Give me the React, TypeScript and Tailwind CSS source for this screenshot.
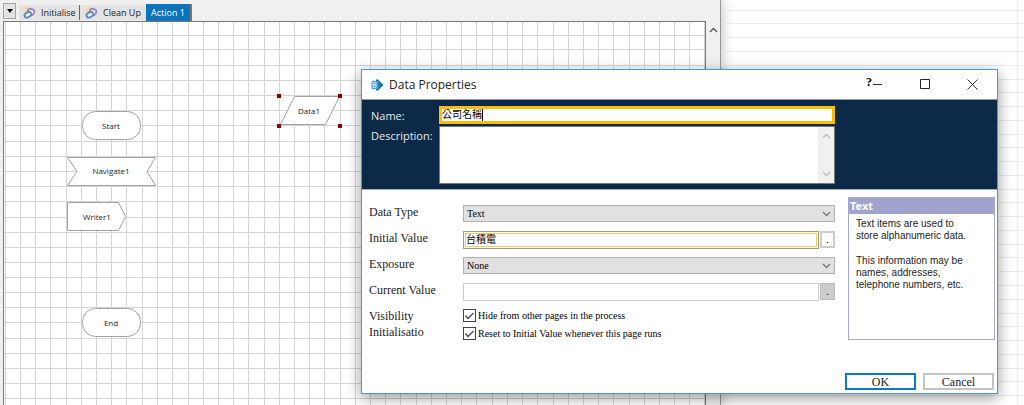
import { useState } from 'react';

const V_LINES = [5, 20, 35, 50, 66, 81, 96, 111, 126, 142, 157, 172, 188, 203, 218, 233, 248, 264, 279, 294, 309, 324, 340, 355, 370, 385, 400, 416, 431, 446, 461, 476, 492, 507, 522, 537, 553, 568, 583, 598, 613, 629, 644, 659, 674, 689, 704];
const H_LINES = [35, 49, 65, 80, 95, 110, 125, 141, 156, 171, 186, 201, 217, 232, 247, 262, 277, 292, 307, 322, 338, 353, 368, 383, 398];
const SHEET_LINES = [10, 23, 37, 51, 65, 79, 92, 106, 120, 134, 147, 161, 175, 189, 202, 216, 230, 244, 257, 271, 285, 299, 313, 326, 340, 354, 368, 381, 395];

function PageIcon() {
  return (
    <svg className="shrink-0" width="13" height="12" viewBox="0 0 13 12" fill="none">
      <path d="M3.5 0v7M0 3.5h7M1.2 1.2l4.6 4.6M5.8 1.2L1.2 5.8" stroke="#f5d596" strokeWidth="1.2" />
      <rect x="5" y="2" width="6.5" height="5.5" rx="2.2" transform="rotate(22 8 4)" stroke="#9f7fc4" strokeWidth="1.8" fill="#f3edf8" />
      <rect x="1.5" y="5.5" width="7" height="4.5" rx="2" transform="rotate(-28 5 8)" stroke="#5288c0" strokeWidth="1.8" fill="#e6f0fa" />
    </svg>
  );
}

function Toolbar() {
  return (
    <div className="flex h-[21px] items-start bg-[#f0f0f0] pl-[3px] pt-[3px]">
      <button aria-label="Page list" className="flex h-4 w-[13px] items-center justify-center border border-[#a5a5a5] bg-[#e4e4e4]">
        <svg width="6" height="4" viewBox="0 0 6 4"><path d="M0 0h6L3 4z" fill="#000" /></svg>
      </button>
      <div role="tablist" className="ml-[3px] flex items-start text-[9px] leading-[14px] text-[#222]">
        <button role="tab" className="mt-[2px] flex h-[15px] w-[61px] items-center gap-[5px] border-r border-[#666] bg-[#e3e3e3] pl-1 whitespace-nowrap"><PageIcon />Initialise</button>
        <button role="tab" className="mt-[2px] flex h-[15px] w-[66px] items-center gap-[5px] bg-[#e3e3e3] pl-[5px] whitespace-nowrap"><PageIcon />Clean Up</button>
        <button role="tab" aria-selected="true" className="mt-px h-[17px] w-[46px] border-r-2 border-[#777] bg-[#0b74bd] text-white whitespace-nowrap">Action 1</button>
      </div>
    </div>
  );
}

function Canvas() {
  return (
    <svg className="block h-full w-full" role="img" aria-label="Process flow">
      <svg x="-4" y="-22" width="710" height="430" overflow="visible">
        <g stroke="#d5d5d5" strokeWidth="1">
          {V_LINES.map((x) => <path key={x} d={`M${x + 0.5} 20V2000`} />)}
          {H_LINES.map((y) => <path key={y} d={`M0 ${y + 0.5}H2000`} />)}
        </g>
        <g fill="#fff" stroke="#a3a3a3" strokeWidth="1">
          <rect x="82.5" y="111.5" width="58" height="28" rx="13" />
          <path d="M67.5 157.5H155.5L147 171.5L155.5 185.5H67.5L77 171.5Z" />
          <path d="M67.5 202.5H118.5L125.5 216.5L118.5 230.5H67.5Z" />
          <path d="M294.5 96.5H339.5L325.5 124.5H280.5Z" />
          <rect x="82.5" y="308.5" width="58" height="28" rx="13" />
        </g>
        <g fill="#850000">
          <rect x="277" y="94" width="4" height="4" />
          <rect x="338" y="94" width="4" height="4" />
          <rect x="277" y="124" width="4" height="4" />
          <rect x="338" y="124" width="4" height="4" />
        </g>
        <g className="text-[8px]" fill="#222" textAnchor="middle">
          <text x="111" y="129">Start</text>
          <text x="111" y="174">Navigate1</text>
          <text x="97" y="220">Writer1</text>
          <text x="309" y="114">Data1</text>
          <text x="111" y="326">End</text>
        </g>
      </svg>
    </svg>
  );
}

function Chevron({ up = false }: { up?: boolean }) {
  return (
    <svg width="9" height="6" viewBox="0 0 9 6" fill="none" stroke="currentColor" strokeWidth="1.3">
      <path d={up ? 'M1 5L4.5 1.5L8 5' : 'M1 1L4.5 4.5L8 1'} />
    </svg>
  );
}

function TitleBar() {
  return (
    <div className="flex h-[30px] items-center border-b border-[#8d9aa6] pl-2">
      <svg width="14" height="14" viewBox="0 0 14 14">
        <path d="M1 3.500L4 1.500v11L1 10.500z" fill="#9ccbe9" />
        <path d="M6 1.500h2l5.500 5.500L8 12.500H6z" fill="#1571b5" />
        <path d="M2.500 3h6v8h-6z" fill="#4b9fd6" />
        <path d="M3.500 4.500h2.500v2H3.500zM3.500 7h2.500v2.500H3.500z" fill="none" stroke="#e2f1fb" strokeWidth=".8" />
      </svg>
      <h1 className="ml-[5px] flex-1 text-[12px] leading-4 text-[#222]">Data Properties</h1>
      <button aria-label="Help" className="mb-[6px] font-['Liberation_Serif'] text-[12px] leading-3 font-bold text-black">?</button>
      <button aria-label="Minimise" className="w-[11px] text-[#333]">
        <svg width="11" height="11" viewBox="0 0 11 11"><path d="M1 5.500h9" stroke="currentColor" /></svg>
      </button>
      <button aria-label="Maximise" className="ml-9 text-[#222]">
        <svg width="11" height="11" viewBox="0 0 11 11" fill="none"><path d="M1.500.5h9v9h-9z" stroke="currentColor" /></svg>
      </button>
      <button aria-label="Close" className="mr-[19px] ml-[37px] text-[#333]">
        <svg width="11" height="11" viewBox="0 0 11 11"><path d="M.5.5l10 10M10.500.5l-10 10" stroke="currentColor" /></svg>
      </button>
    </div>
  );
}

function Header() {
  const [name, setName] = useState('公司名稱');
  return (
    <div className="grid grid-cols-[68px_396px] gap-y-[2px] border-b border-[#a4b0bc] bg-[#0c2948] pt-[6px] pb-[5px] pl-[9px] text-[11px] text-[#e4e9ee]">
      <label htmlFor="name" className="pt-[2px] leading-4">Name:</label>
      <div className="flex h-[18px] min-w-0 border-[3px] border-[#fdbe02] bg-white">
        <input
          id="name"
          value={name}
          onChange={(e) => setName(e.target.value)}
          size={4}
          className="h-3 w-10 font-['Liberation_Serif','Noto_Sans_CJK_TC',sans-serif] text-[10px] leading-3 text-black outline-none"
        />
        <span className="h-3 w-px bg-black" />
      </div>
      <label htmlFor="description" className="pt-[2px] leading-4">Description:</label>
      <div className="flex h-[58px] border border-[#777] bg-white">
        <textarea id="description" className="min-w-0 flex-1 resize-none outline-none" />
        <div className="flex w-4 flex-col items-center justify-between bg-[#f0f0f0] py-[6px] text-[#bbb]">
          <Chevron up />
          <Chevron />
        </div>
      </div>
    </div>
  );
}

function Select({ id, value }: { id: string; value: string }) {
  return (
    <div className="grid h-[17px] items-center border border-[#b0b0b0] bg-[#e1e1e1]">
      <select id={id} className="col-start-1 row-start-1 h-[15px] w-full appearance-none pl-[3px] text-[10px] leading-[14px] text-black outline-none">
        <option>{value}</option>
      </select>
      <span className="pointer-events-none col-start-1 row-start-1 mr-[3px] justify-self-end text-[#777]"><Chevron /></span>
    </div>
  );
}

function Check({ id, label }: { id: string; label: string }) {
  const [on, setOn] = useState(true);
  return (
    <div className="flex h-[18px] items-start text-[10px] leading-[13px] text-black">
      <div className="grid">
        <input
          id={id}
          type="checkbox"
          checked={on}
          onChange={() => setOn(!on)}
          className="col-start-1 row-start-1 size-[13px] appearance-none border border-[#444] bg-white"
        />
        {on && (
          <svg className="pointer-events-none col-start-1 row-start-1" width="13" height="13" viewBox="0 0 13 13" fill="none">
            <path d="M2.500 6.500L5 9.500L10.500 4" stroke="#444" strokeWidth="1.200" />
          </svg>
        )}
      </div>
      <label htmlFor={id} className="ml-[2px] whitespace-nowrap">{label}</label>
    </div>
  );
}

function Form() {
  const [initial, setInitial] = useState('台積電');
  return (
    <div className="w-[466px] pt-[15px] font-['Liberation_Serif','Noto_Sans_CJK_TC',serif]">
      <div className="grid grid-cols-[94px_1fr] text-[12px] leading-[14px] text-[#222]">
        <label htmlFor="type" className="h-[26px]">Data Type</label>
        <Select id="type" value="Text" />
        <label htmlFor="initial" className="h-[26px]">Initial Value</label>
        <div className="flex h-[18px] gap-px">
          <div className="min-w-0 flex-1 border border-[#999] p-px">
            <input
              id="initial"
              value={initial}
              onChange={(e) => setInitial(e.target.value)}
              className="block h-[14px] w-full border border-[#f6cf4a] pb-[3px] text-[10px] leading-3 text-black outline-none"
            />
          </div>
          <button aria-label="Edit initial value" className="h-[17px] w-[15px] border-2 border-[#ccc] bg-white text-[10px] leading-3 text-black">.</button>
        </div>
        <label htmlFor="exposure" className="h-[26px]">Exposure</label>
        <Select id="exposure" value="None" />
        <label htmlFor="current" className="h-[26px]">Current Value</label>
        <div className="flex h-[18px] gap-px">
          <input id="current" disabled className="min-w-0 flex-1 border border-[#ccc] bg-white" />
          <button aria-label="View current value" className="h-[17px] w-[15px] border border-[#bbb] bg-[#ccc] text-[10px] leading-3 text-black">.</button>
        </div>
        <span className="h-[17px]">Visibility</span>
        <Check id="hide" label="Hide from other pages in the process" />
        <span className="leading-[11px]">Initialisatio</span>
        <Check id="reset" label="Reset to Initial Value whenever this page runs" />
      </div>
    </div>
  );
}

function DataDialog() {
  return (
    <section role="dialog" aria-label="Data Properties" className="absolute top-[69px] right-[26px] left-[361px] border border-[#4d97d2] bg-white shadow-[0_4px_14px_rgba(0,0,0,0.4)]">
      <TitleBar />
      <Header />
      <div className="flex pr-[2px] pl-[7px]">
        <Form />
        <aside className="mt-[7px] ml-[13px] h-[143px] flex-1 border border-[#a5a9cf] text-[10px] leading-3 text-[#222]">
          <h2 className="h-4 bg-[#a0a4cd] pl-px font-['Noto_Sans'] text-[11px] leading-4 font-bold text-white">Text</h2>
          <div className="pt-1 pl-[7px] font-['Liberation_Sans'] whitespace-nowrap">
            <p>Text items are used to<br />store alphanumeric data.</p>
            <p className="mt-[13px]">This information may be<br />names, addresses,<br />telephone numbers, etc.</p>
          </div>
        </aside>
      </div>
      <div className="mt-7 mr-[3px] mb-[3px] flex justify-end gap-[7px] font-['Liberation_Serif'] text-[12px] leading-3 text-[#222]">
        <button className="h-[17px] w-[71px] border-2 border-[#0c78d4] bg-white">OK</button>
        <button className="h-[17px] w-[71px] border-2 border-[#c4c4c4] bg-white">Cancel</button>
      </div>
    </section>
  );
}

export default function App() {
  return (
    <main className="relative flex h-screen overflow-hidden bg-white font-['Open_Sans','Noto_Sans_CJK_TC',sans-serif]">
      <div className="flex w-[721px] shrink-0 flex-col border-r border-[#999] bg-[#f0f0f0] shadow-[0_0_12px_rgba(0,0,0,0.3)]">
        <Toolbar />
        <div className="flex min-h-0 flex-1 pl-[3px]">
          <div className="min-w-0 flex-1 border-x border-t border-[#777] bg-white"><Canvas /></div>
          <div className="flex w-[14px] justify-center pt-[6px] text-[#555]"><Chevron up /></div>
        </div>
      </div>
      <div className="min-w-0 flex-1">
        <svg className="block h-full w-full" stroke="#ebebeb">
          {SHEET_LINES.map((y) => <path key={y} d={`M0 ${y + 0.5}H2000`} />)}
          <path d="M296.500 0V2000" />
        </svg>
      </div>
      <DataDialog />
    </main>
  );
}
